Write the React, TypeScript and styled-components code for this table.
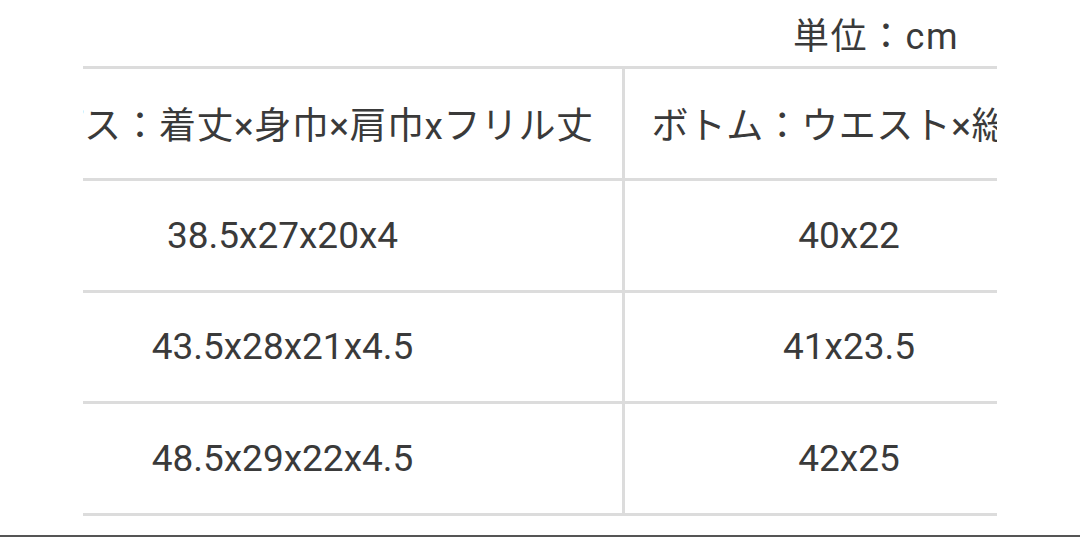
import { Fragment } from "react";
import styled, { createGlobalStyle } from "styled-components";

const GlobalStyle = createGlobalStyle`
  html, body {
    margin: 0;
    padding: 0;
    background: #fff;
  }
  body {
    font-family: Roboto, "Noto Sans CJK JP", sans-serif;
    color: #3a3a3a;
  }
`;

const Page = styled.div`
  width: 1080px;
  height: 537px;
  overflow: hidden;
  display: flex;
  flex-direction: column;
`;

const Content = styled.div`
  width: 914px;
  margin-left: 83px;
`;

const Unit = styled.div`
  height: 66px;
  box-sizing: border-box;
  padding: 12px 38px 0 0;
  text-align: right;
  font-size: 36px;
  line-height: 50px;
  letter-spacing: 1.5px;
`;

const Frame = styled.div`
  width: 914px;
  overflow: hidden;
`;

const Grid = styled.div`
  display: grid;
  grid-template-columns: 682px 448px;
  margin-left: -140px;
  border-top: 3px solid #dcdcdc;
`;

const Cell = styled.div<{ $first?: boolean; $head?: boolean }>`
  display: flex;
  align-items: center;
  justify-content: center;
  height: 108.75px;
  border-bottom: 3px solid #dcdcdc;
  border-right: ${(p) => (p.$first ? "3px solid #dcdcdc" : "none")};
  font-size: 37px;
  letter-spacing: ${(p) => (p.$head ? "0.5px" : "0")};
  white-space: nowrap;
`;

const BottomBar = styled.div`
  margin-top: auto;
  height: 2px;
  background: #555;
`;

const rows = [
  ["トップス：着丈×身巾×肩巾xフリル丈", "ボトム：ウエスト×総丈"],
  ["38.5x27x20x4", "40x22"],
  ["43.5x28x21x4.5", "41x23.5"],
  ["48.5x29x22x4.5", "42x25"],
];

export default function App() {
  return (
    <Page>
      <GlobalStyle />
      <Content>
        <Unit>単位：cm</Unit>
        <Frame>
          <Grid>
            {rows.map(([a, b], i) => (
              <Fragment key={i}>
                <Cell $first $head={i === 0}>
                  {a}
                </Cell>
                <Cell $head={i === 0}>{b}</Cell>
              </Fragment>
            ))}
          </Grid>
        </Frame>
      </Content>
      <BottomBar />
    </Page>
  );
}
